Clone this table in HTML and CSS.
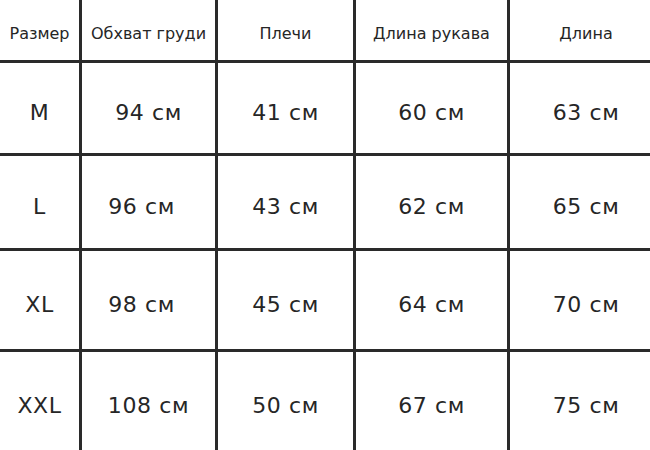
FILE: index.html
```html
<!DOCTYPE html>
<html lang="ru">
<head>
<meta charset="utf-8">
<link rel="stylesheet" href="styles.css">
</head>
<body>
<div class="table">
  <div class="cell head">Размер</div>
  <div class="cell head">Обхват груди</div>
  <div class="cell head">Плечи</div>
  <div class="cell head">Длина рукава</div>
  <div class="cell head last">Длина</div>

  <div class="cell">M</div>
  <div class="cell">94 см</div>
  <div class="cell">41 см</div>
  <div class="cell">60 см</div>
  <div class="cell last">63 см</div>

  <div class="cell">L</div>
  <div class="cell shift">96 см</div>
  <div class="cell">43 см</div>
  <div class="cell">62 см</div>
  <div class="cell last">65 см</div>

  <div class="cell">XL</div>
  <div class="cell shift">98 см</div>
  <div class="cell">45 см</div>
  <div class="cell">64 см</div>
  <div class="cell last">70 см</div>

  <div class="cell">XXL</div>
  <div class="cell">108 см</div>
  <div class="cell">50 см</div>
  <div class="cell">67 см</div>
  <div class="cell last">75 см</div>
</div>
</body>
</html>
```
FILE: styles.css
```css
html, body {
  margin: 0;
  padding: 0;
  background: #ffffff;
}
.table {
  width: 650px;
  height: 450px;
  display: grid;
  grid-template-columns: 79px 133px 135px 151px 140px;
  grid-template-rows: 60px 90px 92px 98px 98px;
  gap: 3px;
  background: #2a2a2a;
  font-family: "DejaVu Sans", "Liberation Sans", sans-serif;
  color: #262626;
}
.cell {
  background: #ffffff;
  display: flex;
  align-items: center;
  justify-content: center;
  font-size: 22px;
  letter-spacing: 0.6px;
  padding-top: 8px;
  box-sizing: border-box;
  white-space: nowrap;
}
.head {
  font-size: 16px;
  letter-spacing: 0;
  padding-top: 6px;
}
.shift {
  padding-right: 14px;
}
.last {
  padding-left: 12px;
}
```
